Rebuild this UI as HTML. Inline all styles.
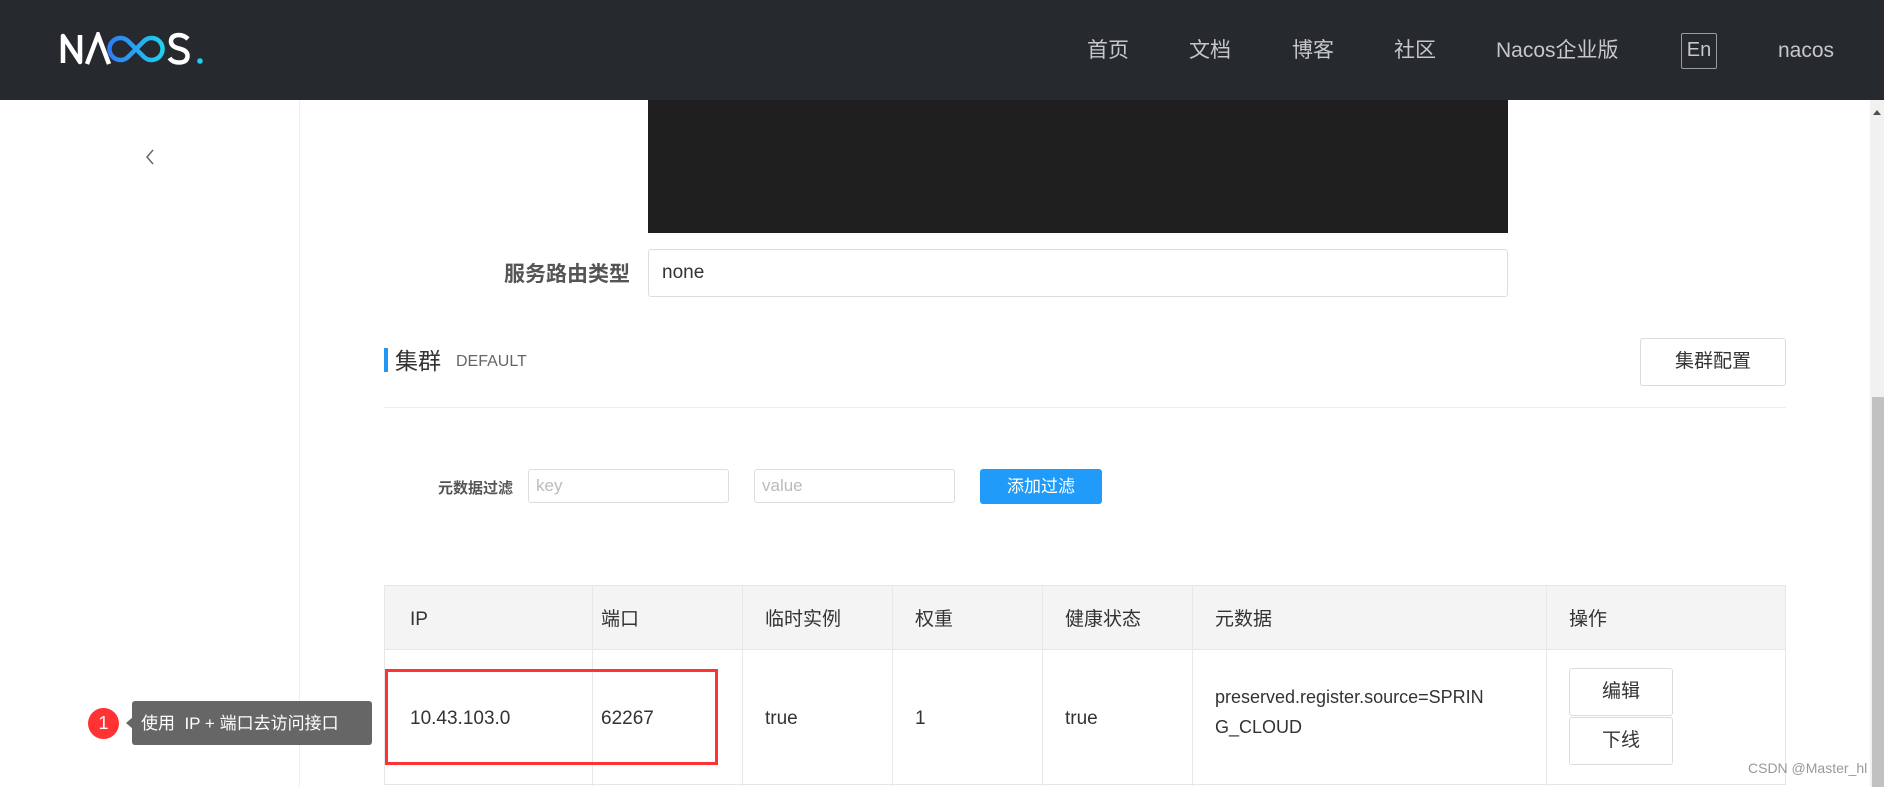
<!DOCTYPE html>
<html><head><meta charset="utf-8">
<style>
*{margin:0;padding:0;box-sizing:border-box}
body{width:1884px;height:787px;overflow:hidden;background:#fff;font-family:"Liberation Sans","Noto Sans CJK SC",sans-serif;color:#333;position:relative}
.abs{position:absolute}
.hdr{left:0;top:0;width:1884px;height:100px;background:#262a2f}
.nav{top:37px;font-size:21px;color:#c5c7c9;line-height:28px;white-space:nowrap}
.en{left:1681px;top:33px;width:36px;height:36px;border:1px solid #9a9c9e;border-radius:2px;color:#c5c7c9;font-size:20px;text-align:center;line-height:32px}
.side{left:299px;top:100px;width:1px;height:687px;background:#eee}
.blk{left:648px;top:100px;width:860px;height:133px;background:#1f1f1f}
.lbl{font-weight:bold;color:#555;font-size:21px;white-space:nowrap}
.inp{border:1px solid #ddd;border-radius:3px;background:#fff}
.tbl{left:384px;top:585px;width:1402px;height:200px;border:1px solid #e6e6e6}
.th{top:0;height:64px;background:#f4f4f4;border-bottom:1px solid #e6e6e6;width:1400px;left:0}
.vl{top:0;width:1px;height:200px;background:#e8e8e8}
.t{font-size:19px;white-space:nowrap;line-height:24px}
.btn{border:1px solid #dcdcdc;border-radius:3px;background:#fff;text-align:center;font-size:19px;color:#333}
</style></head><body>
<div class="abs hdr"></div>
<svg class="abs" style="left:58px;top:32px" width="150" height="34" viewBox="0 0 150 34">
<defs><linearGradient id="g" x1="0" x2="1"><stop offset="0" stop-color="#2f7cf6"/><stop offset="1" stop-color="#1fd0f0"/></linearGradient></defs>
<path d="M5 31V4L22 30V3" fill="none" stroke="#fff" stroke-width="4.5" stroke-linejoin="round"/>
<path d="M29 32L40 3L51 32" fill="none" stroke="#fff" stroke-width="4.5"/>
<path d="M70 9a11 11 0 1 0 0 16L86 9a11 11 0 1 1 0 16Z" fill="none" stroke="url(#g)" stroke-width="4.5"/>
<path d="M130 7q-4-4-9.5-4q-7.5 0.5-7.5 6.5q0 5 8 7q9 2 8.5 8q-0.5 6-8.5 6q-6.5 0-9.5-4.5" fill="none" stroke="#fff" stroke-width="4.5"/>
<circle cx="142" cy="29" r="2.8" fill="#1fd0f0"/>
</svg>
<div class="abs nav" style="left:1087px">首页</div>
<div class="abs nav" style="left:1189px">文档</div>
<div class="abs nav" style="left:1292px">博客</div>
<div class="abs nav" style="left:1394px">社区</div>
<div class="abs nav" style="left:1496px">Nacos企业版</div>
<div class="abs en">En</div>
<div class="abs nav" style="left:1778px">nacos</div>

<div class="abs side"></div>
<svg class="abs" style="left:143px;top:148px" width="14" height="18"><path d="M10 2L4 9L10 16" fill="none" stroke="#666" stroke-width="1.5"/></svg>

<div class="abs blk"></div>
<div class="abs lbl" style="right:1254px;top:258px">服务路由类型</div>
<div class="abs inp" style="left:648px;top:249px;width:860px;height:48px"></div>
<div class="abs t" style="left:662px;top:261px">none</div>

<div class="abs" style="left:384px;top:348px;width:4px;height:24px;background:#2196f3"></div>
<div class="abs" style="left:395px;top:342px;font-size:23px;color:#333">集群</div>
<div class="abs" style="left:456px;top:353px;font-size:16px;color:#666">DEFAULT</div>
<div class="abs btn" style="left:1640px;top:338px;width:146px;height:48px;line-height:46px">集群配置</div>
<div class="abs" style="left:384px;top:407px;width:1402px;height:1px;background:#eee"></div>

<div class="abs lbl" style="left:438px;top:477px;font-size:15px">元数据过滤</div>
<div class="abs inp" style="left:528px;top:469px;width:201px;height:34px"></div>
<div class="abs" style="left:536px;top:476px;font-size:17px;color:#bbb">key</div>
<div class="abs inp" style="left:754px;top:469px;width:201px;height:34px"></div>
<div class="abs" style="left:762px;top:476px;font-size:17px;color:#bbb">value</div>
<div class="abs" style="left:980px;top:469px;width:122px;height:35px;background:#209bfa;border-radius:3px;color:#fff;font-size:17px;text-align:center;line-height:35px">添加过滤</div>

<div class="abs tbl">
<div class="abs th"></div>
<div class="abs vl" style="left:207px"></div>
<div class="abs vl" style="left:357px"></div>
<div class="abs vl" style="left:507px"></div>
<div class="abs vl" style="left:657px"></div>
<div class="abs vl" style="left:807px"></div>
<div class="abs vl" style="left:1161px"></div>
<div class="abs t" style="left:25px;top:22px">IP</div>
<div class="abs t" style="left:216px;top:22px">端口</div>
<div class="abs t" style="left:380px;top:22px">临时实例</div>
<div class="abs t" style="left:530px;top:22px">权重</div>
<div class="abs t" style="left:680px;top:22px">健康状态</div>
<div class="abs t" style="left:830px;top:22px">元数据</div>
<div class="abs t" style="left:1184px;top:22px">操作</div>
<div class="abs t" style="left:25px;top:121px">10.43.103.0</div>
<div class="abs t" style="left:216px;top:121px">62267</div>
<div class="abs t" style="left:380px;top:121px">true</div>
<div class="abs t" style="left:530px;top:121px">1</div>
<div class="abs t" style="left:680px;top:121px">true</div>
<div class="abs t" style="left:830px;top:96px;font-size:18px;line-height:30px">preserved.register.source=SPRIN<br>G_CLOUD</div>
<div class="abs btn" style="left:1184px;top:82px;width:104px;height:48px;line-height:46px">编辑</div>
<div class="abs btn" style="left:1184px;top:131px;width:104px;height:48px;line-height:46px">下线</div>
</div>
<div class="abs" style="left:385px;top:669px;width:333px;height:96px;border:3px solid #f33"></div>

<div class="abs" style="left:88px;top:708px;width:31px;height:31px;border-radius:50%;background:#f33;color:#fff;font-size:18px;text-align:center;line-height:31px">1</div>
<div class="abs" style="left:126px;top:717px;width:0;height:0;border-top:6px solid transparent;border-bottom:6px solid transparent;border-right:7px solid #666"></div>
<div class="abs" style="left:132px;top:701px;width:240px;height:44px;background:#666;border-radius:3px;color:#fff;font-size:17px;line-height:46px;padding-left:9px;white-space:nowrap">使用&nbsp; IP + 端口去访问接口</div>

<div class="abs" style="left:1748px;top:760px;font-size:14px;color:#999">CSDN @Master_hl</div>
<div class="abs" style="left:1870px;top:100px;width:14px;height:687px;background:#f1f1f1"></div>
<div class="abs" style="left:1872px;top:397px;width:12px;height:390px;background:#c1c1c1"></div>
<svg class="abs" style="left:1872px;top:108px" width="10" height="8"><path d="M1 7L5 2L9 7Z" fill="#505050"/></svg>
</body></html>
